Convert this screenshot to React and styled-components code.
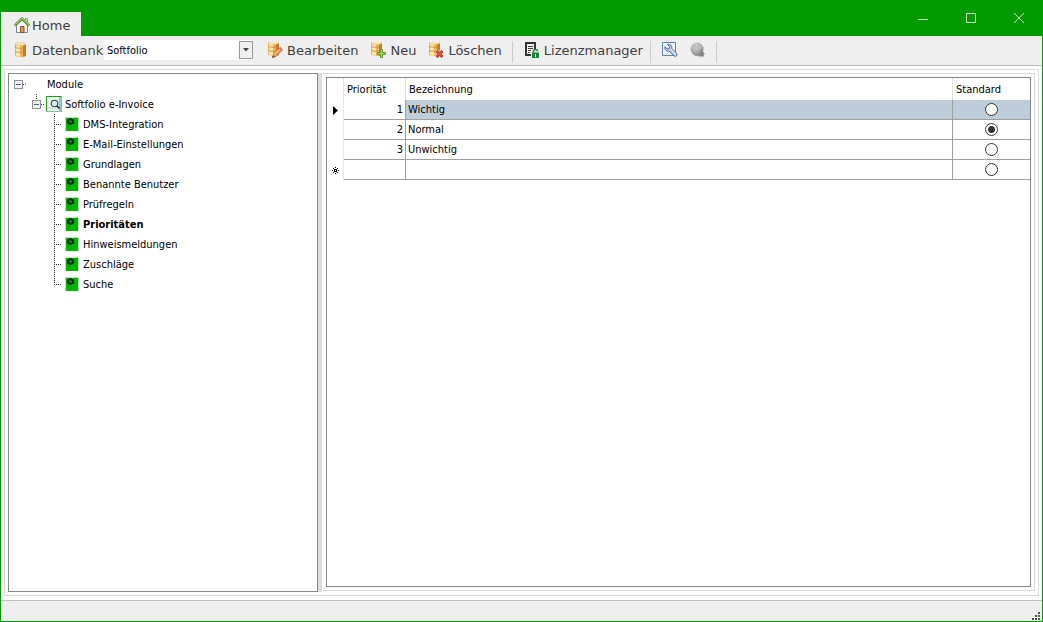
import React, { useState } from 'react';
import styled, { createGlobalStyle } from 'styled-components';

const GlobalStyle = createGlobalStyle`
  * {
    box-sizing: border-box;
  }

  body {
    margin: 0;
    font-family: 'DejaVu Sans Condensed', 'DejaVu Sans', sans-serif;
    font-size: 11px;
    color: #000;
  }

  button, select, input {
    font-family: inherit;
    margin: 0;
  }
`;

const Window = styled.div`
  display: flex;
  flex-direction: column;
  min-height: 100vh;
  background-color: #009900;
`;

const TitleBar = styled.header`
  display: flex;
  align-items: flex-end;
  justify-content: space-between;
  height: 36px;
  padding-left: 1px;
`;

const Tab = styled.button`
  display: flex;
  align-items: center;
  gap: 2px;
  height: 24px;
  padding: 2px 11px 0 13px;
  border: 0;
  background-color: #efefef;
  font-family: 'DejaVu Sans', sans-serif;
  font-size: 13px;
  color: #404040;
`;

const WindowButtons = styled.div`
  display: flex;
  align-self: stretch;
`;

const WindowButton = styled.button`
  display: flex;
  align-items: center;
  justify-content: center;
  width: 48px;
  padding: 0;
  border: 0;
  background: transparent;
  color: #c8dcc4;

  &:hover {
    background-color: #33ad33;
  }
`;

const Frame = styled.div`
  display: flex;
  flex-direction: column;
  flex: 1;
  margin: 0 1px 1px;
  background-color: #fff;
`;

const Toolbar = styled.div`
  display: flex;
  align-items: center;
  height: 30px;
  padding: 0 0 1px 12px;
  background-color: #efefef;
  border-bottom: 1px solid #c0c0c0;
  font-family: 'DejaVu Sans', sans-serif;
  font-size: 13px;
  color: #404040;
`;

const ToolLabel = styled.label`
  display: flex;
  align-items: center;
  gap: 3px;
  width: 91px;
`;

const ToolButton = styled.button`
  display: flex;
  align-items: center;
  gap: 4px;
  height: 24px;
  padding: 0 ${(props) => (props.$tight ? 3 : 6)}px 0 6px;
  border: 0;
  background: transparent;
  font-family: 'DejaVu Sans', sans-serif;
  font-size: 13px;
  color: #404040;

  &:hover {
    background-color: #dfe8df;
  }
`;

const Separator = styled.span`
  width: 1px;
  height: 22px;
  margin: 4px 5px 0 4px;
  background-color: #cccccc;
`;

const SelectWrap = styled.div`
  position: relative;
  width: 149px;
  height: 20px;
  margin-right: 8px;
  background-color: #fff;
`;

const Select = styled.select`
  appearance: none;
  display: block;
  width: 100%;
  height: 20px;
  padding: 0 18px 0 3px;
  border: 0;
  background: transparent;
  font-family: 'DejaVu Sans Condensed', 'DejaVu Sans', sans-serif;
  font-size: 11px;
  color: #000;
`;

const SelectArrow = styled.span`
  position: absolute;
  top: 1px;
  right: 0;
  display: flex;
  align-items: center;
  justify-content: center;
  width: 14px;
  height: 18px;
  border: 1px solid #999;
  background-color: #f0f0f0;
  pointer-events: none;
`;

const Workspace = styled.main`
  display: flex;
  flex: 1;
  margin: 3px;
  padding: 3px;
  border: 1px solid #dcdcdc;
`;

const TreePanel = styled.nav`
  width: 310px;
  border: 1px solid #828790;
`;

const Splitter = styled.div`
  width: 4px;
  background-color: #dcdcdc;
`;

const GridFrame = styled.section`
  display: flex;
  flex: 1;
  margin-bottom: 1px;
  padding: 3px;
  border: 1px solid #dcdcdc;
  border-left-color: #fff;
`;

const GridPanel = styled.div`
  flex: 1;
  border: 1px solid #828790;
`;

const TreeList = styled.ul`
  margin: 0;
  padding: 0;
  list-style: none;
`;

const TreeRow = styled.div`
  display: flex;
  align-items: center;
  height: 20px;
  padding-left: ${(props) => props.$indent}px;
`;

const TreeLink = styled.a`
  padding-left: ${(props) => props.$gap || 4}px;
  color: #000;
  text-decoration: none;
  font-weight: ${(props) => (props.$active ? 'bold' : 'normal')};
`;

const Toggle = styled.button`
  display: flex;
  padding: 0;
  border: 0;
  background: transparent;
`;

const Table = styled.table`
  width: 100%;
  table-layout: fixed;
  border-collapse: separate;
  border-spacing: 0;
`;

const Col = styled.col`
  width: ${(props) => props.$width}px;
`;

const HeadCell = styled.th`
  height: 22px;
  padding: 0 3px;
  border-right: 1px solid #e0e0e0;
  text-align: left;
  font-weight: normal;

  &:last-child {
    border-right: 0;
  }
`;

const MarkerCell = styled.td`
  height: 20px;
  padding: 0 0 0 4px;
  border-right: 1px solid #e8e8e8;
  line-height: 0;
`;

const Cell = styled.td`
  height: 20px;
  padding: 0 2px;
  border-right: 1px solid #a0a0a0;
  border-bottom: 1px solid #a0a0a0;
  text-align: ${(props) => props.$align || 'left'};
  background-color: ${(props) => (props.$selected ? '#bfcddb' : '#fff')};

  &:last-child {
    border-right: 0;
  }
`;

const Radio = styled.input`
  appearance: none;
  display: block;
  width: 13px;
  height: 13px;
  margin: 0 auto;
  border: 1px solid #333;
  border-radius: 50%;
  background-color: #fff;

  &:checked {
    background-image: radial-gradient(circle, #333 3px, #fff 4px);
  }
`;

const StatusBar = styled.footer`
  display: flex;
  align-items: flex-end;
  justify-content: flex-end;
  height: 21px;
  margin-top: 1px;
  padding: 0 1px 0 0;
  border-top: 1px solid #c0c0c0;
  background-color: #efefef;
`;

const Cylinder = () => (
  <>
    <path d="M2 2h11v11.500c0 .8-2.500 1.500-5.500 1.500s-5.500-.7-5.500-1.500z" fill="#eeb453" />
    <path d="M3 2h4v12.800c-2 0-4-.5-4-1.300z" fill="#fbe6ae" />
    <path d="M10 2h3v11.500c0 .6-1.200 1.100-3 1.300z" fill="#c8772c" />
    <path d="M2 5.500c2 1 9 1 11 0M2 9.500c2 1 9 1 11 0" fill="none" stroke="#c98334" strokeWidth=".8" />
    <ellipse cx="7.500" cy="2" rx="5.300" ry="1.300" fill="#fdf1cc" stroke="#dfb060" strokeWidth=".6" />
  </>
);

const DatabaseIcon = () => (
  <svg width="16" height="16" viewBox="0 0 16 16">
    <Cylinder />
  </svg>
);

const EditIcon = () => (
  <svg width="16" height="16" viewBox="0 0 16 16">
    <g transform="translate(-1 -1)"><Cylinder /></g>
    <path d="M5.500 15.500l1-3.500 6.500-6.500 2.500 2.500-6.500 6.500z" fill="#eea04e" stroke="#8f5c3a" strokeWidth=".7" />
    <path d="M12 6.500l1.500-1.500 2 2-1.500 1.500z" fill="#d97b6c" />
    <path d="M7 12.500l5-5" stroke="#ffe0b0" />
    <path d="M5.300 15.700l.7-2.200 1.500 1.500z" fill="#333" />
  </svg>
);

const AddIcon = () => (
  <svg width="16" height="16" viewBox="0 0 16 16">
    <g transform="translate(-1 -1)"><Cylinder /></g>
    <path d="M10 7h3v3h3v3h-3v3h-3v-3h-3v-3h3z" fill="#efefef" />
    <path d="M10.500 7.500h2v3h3v2h-3v3h-2v-3h-3v-2h3z" fill="#a5d860" stroke="#4f8f22" strokeWidth=".9" />
  </svg>
);

const DeleteIcon = () => (
  <svg width="16" height="16" viewBox="0 0 16 16">
    <g transform="translate(-1 -1)"><Cylinder /></g>
    <path d="M8.500 9l6 6M14.500 9l-6 6" stroke="#f2d5cc" strokeWidth="4" />
    <path d="M8.500 9l6 6M14.500 9l-6 6" stroke="#b8322b" strokeWidth="2.800" />
    <path d="M9 9.500l5 5M14 9.500l-5 5" stroke="#e8756a" strokeWidth="1" />
  </svg>
);

const HomeIcon = () => (
  <svg width="16" height="16" viewBox="0 0 16 16">
    <path d="M2.500 8v7.500h11v-7.500l-5.500-6z" fill="#f4f8ff" stroke="#7187a8" />
    <path d="M11.500 1.500h2v4l-2-2z" fill="#d6dce5" stroke="#6882a0" strokeWidth=".7" />
    <path d="M.8 8.500l7.200-7 7.200 7" fill="none" stroke="#527f25" strokeWidth="2.600" />
    <path d="M.9 8l7.100-6.900 7.100 6.900" fill="none" stroke="#a8d36a" strokeWidth="1.100" />
    <path d="M6.500 15.500v-6h3.500v6z" fill="#e39a5c" stroke="#98501f" />
  </svg>
);

const LicenseIcon = () => (
  <svg width="16" height="16" viewBox="0 0 16 16">
    <path d="M1 0h11v7h-2v-5h-7v10h4v2h-6z" fill="#333" />
    <path d="M4 4.500h5M4 6.500h5M4 8.500h3M4 10.500h2" stroke="#444" />
    <path d="M9.500 11v-1.700c0-2.400 4-2.400 4 0" fill="none" stroke="#15863b" strokeWidth="1.400" />
    <path d="M8 10.500h7v5.500h-7z" fill="#15863b" />
    <path d="M11 12h1v3h-1z" fill="#fff" />
  </svg>
);

const WrenchIcon = () => (
  <svg width="16" height="16" viewBox="0 0 16 16">
    <path d="M.5.5h13v13h-13z" fill="#edf3fd" stroke="#6180b2" />
    <path d="M5.500 2.500c2.500-.8 4.800 1.300 4.200 3.900l5 5c1.300 1.600-.9 3.900-2.600 2.600l-5-5c-2.500.7-4.900-1.400-4.100-4.200l2.200 2.200 2-.5.500-1.900z" fill="#bacbe3" stroke="#52698c" />
    <path d="M9 7.500l4.500 4.500" stroke="#f6faff" />
  </svg>
);

const GlobeIcon = () => (
  <svg width="16" height="16" viewBox="0 0 16 16">
    <defs>
      <radialGradient id="globe" cx=".4" cy=".3" r=".7">
        <stop offset="0" stopColor="#dcdcdc" />
        <stop offset="1" stopColor="#8c8c8c" />
      </radialGradient>
    </defs>
    <circle cx="7" cy="7" r="6.500" fill="url(#globe)" />
    <path d="M2 4c2-2 4-1 5 0s-1 2-2 3-3-1-3-3zM8 2l4 2-1 3-3-1z" fill="#bcbcbc" />
    <path d="M11 7.500l4 4.500-1.500.3.500 2.200h-5l-2-1.500 3-1z" fill="#858585" />
    <path d="M3 12c2 2 5 2 7 1" fill="none" stroke="#999" />
  </svg>
);

const GearIcon = () => (
  <svg width="14" height="14" viewBox="0 0 14 14">
    <path d="M0 0h14v14h-14z" fill="#b8e8b5" />
    <path d="M1 1h12v13h-12z" fill="#00b300" />
    <circle cx="5.500" cy="4.500" r="2.200" fill="none" stroke="#06260a" strokeWidth="1.800" />
    <path d="M5.500 1v1M5.500 7v1M2 2.800l1 .7M8 5.500l1 .7M2 6.200l1-.7M8 3.500l1-.7" stroke="#06260a" strokeWidth="1.500" />
  </svg>
);

const InvoiceIcon = () => (
  <svg width="16" height="16" viewBox="0 0 16 16">
    <path d="M0 0h16v16h-16z" fill="#f4f9f7" />
    <path d="M13 1h2v14h-2z" fill="#8bc9b9" />
    <path d="M.5 16v-15.500h15" fill="none" stroke="#12a51c" />
    <path d="M15.500 0v16M0 15.500h15" stroke="#7fc99b" />
    <path d="M2 13l1.500-2 1.500 2M6 13h4" fill="none" stroke="#c9d5de" />
    <circle cx="8.500" cy="7.500" r="3.300" fill="#cff1f2" stroke="#353b40" strokeWidth="1.100" />
    <path d="M11 10l2.500 2.500" stroke="#222" strokeWidth="1.600" />
  </svg>
);

const MinusBox = ({ child }) => (
  <svg width={child ? 14 : 13} height="20" shapeRendering="crispEdges">
    {child && <path d="M4.500 0v6" stroke="#444" strokeDasharray="1 1" />}
    <path d="M.5 6.500h8v8h-8z" fill="#f2f2f2" stroke="#919191" />
    <path d="M2 10.500h5" stroke="#4b63a7" />
    <path d="M9 10.500h4" stroke="#444" strokeDasharray="1 1" />
  </svg>
);

const Branch = ({ last }) => (
  <svg width="11" height="20" viewBox="0 0 11 20" shapeRendering="crispEdges">
    <path d={last ? 'M.5 0v11' : 'M.5 0v20'} stroke="#222" strokeDasharray="1 1" />
    <path d="M2 10.500h6" stroke="#222" strokeDasharray="1 1" />
  </svg>
);

const modules = [
  'DMS-Integration',
  'E-Mail-Einstellungen',
  'Grundlagen',
  'Benannte Benutzer',
  'Prüfregeln',
  'Prioritäten',
  'Hinweismeldungen',
  'Zuschläge',
  'Suche',
];

const rows = [
  { priority: 1, name: 'Wichtig' },
  { priority: 2, name: 'Normal' },
  { priority: 3, name: 'Unwichtig' },
  { priority: '', name: '' },
];

const ModuleTree = () => (
  <TreePanel aria-label="Module">
    <TreeList>
      <li>
        <TreeRow $indent={5}>
          <Toggle aria-label="Module einklappen"><MinusBox /></Toggle>
          <TreeLink href="#module" $gap={20}>Module</TreeLink>
        </TreeRow>
        <TreeList>
          <li>
            <TreeRow $indent={23}>
              <Toggle aria-label="Softfolio e-Invoice einklappen"><MinusBox child /></Toggle>
              <InvoiceIcon />
              <TreeLink href="#e-invoice" $gap={3}>Softfolio e-Invoice</TreeLink>
            </TreeRow>
            <TreeList>
              {modules.map((name, index) => (
                <li key={name}>
                  <TreeRow $indent={45}>
                    <Branch last={index === modules.length - 1} />
                    <GearIcon />
                    <TreeLink href={`#${name}`} $active={name === 'Prioritäten'}>{name}</TreeLink>
                  </TreeRow>
                </li>
              ))}
            </TreeList>
          </li>
        </TreeList>
      </li>
    </TreeList>
  </TreePanel>
);

const RowMarker = ({ index }) => {
  if (index === 0) {
    return <svg width="9" height="9" viewBox="0 0 9 9"><path d="M2 0v9l5-4.500z" fill="#000" /></svg>;
  }
  if (index === rows.length - 1) {
    return (
      <svg width="9" height="9" viewBox="0 0 9 9" shapeRendering="crispEdges">
        <path d="M4 1h1v1h-1zM4 3h1v1h-1zM4 5h1v1h-1zM4 7h1v1h-1zM1 4h1v1h-1zM3 4h1v1h-1zM5 4h1v1h-1zM7 4h1v1h-1zM2 2h1v1h-1zM6 2h1v1h-1zM2 6h1v1h-1zM6 6h1v1h-1zM3 3h1v1h-1zM5 3h1v1h-1zM3 5h1v1h-1zM5 5h1v1h-1z" fill="#000" />
      </svg>
    );
  }
  return null;
};

const PriorityTable = () => {
  const [standard, setStandard] = useState(1);

  return (
    <Table>
      <colgroup>
        <Col $width={17} />
        <Col $width={62} />
        <col />
        <Col $width={77} />
      </colgroup>
      <thead>
        <tr>
          <HeadCell aria-label="Zeile" />
          <HeadCell>Priorität</HeadCell>
          <HeadCell>Bezeichnung</HeadCell>
          <HeadCell>Standard</HeadCell>
        </tr>
      </thead>
      <tbody>
        {rows.map((row, index) => (
          <tr key={index}>
            <MarkerCell><RowMarker index={index} /></MarkerCell>
            <Cell $align="right">{row.priority}</Cell>
            <Cell $selected={index === 0}>{row.name}</Cell>
            <Cell $selected={index === 0}>
              <Radio
                type="radio"
                name="standard"
                aria-label={`Standard ${row.name}`}
                checked={standard === index}
                onChange={() => setStandard(index)}
              />
            </Cell>
          </tr>
        ))}
      </tbody>
    </Table>
  );
};

const App = () => (
  <>
    <GlobalStyle />
    <Window>
      <TitleBar>
        <Tab><HomeIcon />Home</Tab>
        <WindowButtons>
          <WindowButton aria-label="Minimieren">
            <svg width="10" height="10"><path d="M0 6.500h10" stroke="currentColor" /></svg>
          </WindowButton>
          <WindowButton aria-label="Maximieren">
            <svg width="10" height="10"><path d="M.5.5h9v9h-9z" fill="none" stroke="currentColor" /></svg>
          </WindowButton>
          <WindowButton aria-label="Schließen">
            <svg width="10" height="10"><path d="M0 0l10 10M10 0l-10 10" stroke="currentColor" /></svg>
          </WindowButton>
        </WindowButtons>
      </TitleBar>
      <Frame>
        <Toolbar>
          <ToolLabel htmlFor="database"><DatabaseIcon />Datenbank</ToolLabel>
          <SelectWrap>
            <Select id="database">
              <option>Softfolio</option>
            </Select>
            <SelectArrow>
              <svg width="6" height="4"><path d="M0 0h6l-3 3.500z" fill="#444" /></svg>
            </SelectArrow>
          </SelectWrap>
          <ToolButton><EditIcon />Bearbeiten</ToolButton>
          <ToolButton><AddIcon />Neu</ToolButton>
          <ToolButton><DeleteIcon />Löschen</ToolButton>
          <Separator />
          <ToolButton $tight><LicenseIcon />Lizenzmanager</ToolButton>
          <Separator />
          <ToolButton aria-label="Einstellungen"><WrenchIcon /></ToolButton>
          <ToolButton aria-label="Verbindung"><GlobeIcon /></ToolButton>
          <Separator />
        </Toolbar>
        <Workspace>
          <ModuleTree />
          <Splitter />
          <GridFrame>
            <GridPanel>
              <PriorityTable />
            </GridPanel>
          </GridFrame>
        </Workspace>
        <StatusBar>
          <svg width="9" height="9" shapeRendering="crispEdges">
            <path d="M6 0h2v2h-2zM3 3h2v2h-2zM6 3h2v2h-2zM0 6h2v2h-2zM3 6h2v2h-2zM6 6h2v2h-2z" fill="#555" />
          </svg>
        </StatusBar>
      </Frame>
    </Window>
  </>
);

export default App;
